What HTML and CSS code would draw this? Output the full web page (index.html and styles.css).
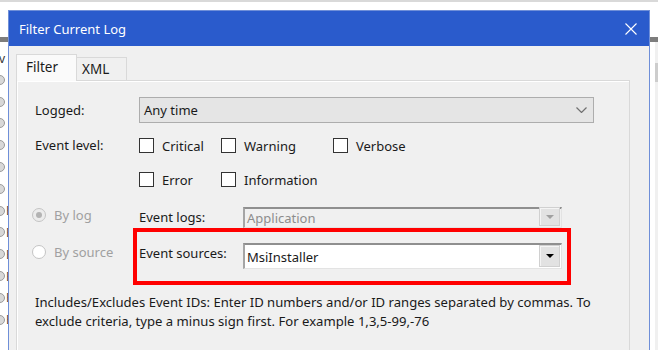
FILE: index.html
```html
<!DOCTYPE html>
<html lang="en">
<head>
    <meta charset="UTF-8">
    <title>Filter Current Log</title>
    <link rel="stylesheet" href="styles.css">
</head>
<body>
<div class="desk">
    <div class="desk-top"></div>
    <div class="desk-bar"></div>
    <div class="desk-main">
        <div class="desk-list">
            <div class="desk-head">v</div>
            <div class="desk-row"><span class="dot"></span><span class="mark">|</span></div>
            <div class="desk-row"><span class="dot"></span><span class="mark">|</span></div>
            <div class="desk-row"><span class="dot"></span><span class="mark">|</span></div>
            <div class="desk-row"><span class="dot"></span><span class="mark">|</span></div>
            <div class="desk-row"><span class="dot"></span><span class="mark">|</span></div>
            <div class="desk-row"><span class="dot"></span><span class="mark">|</span></div>
            <div class="desk-row"><span class="dot"></span><span class="mark e">E</span></div>
            <div class="desk-row"><span class="dot"></span><span class="mark e">E</span></div>
            <div class="desk-row"><span class="dot"></span><span class="mark e">E</span></div>
            <div class="desk-row"><span class="dot"></span><span class="mark e">E</span></div>
            <div class="desk-row"><span class="dot"></span><span class="mark e">E</span></div>
            <div class="desk-row"><span class="dot"></span><span class="mark e">E</span></div>
        </div>
        <div class="desk-scroll"><div class="thumb"></div></div>
    </div>
</div>

<div class="dialog">
    <div class="titlebar">
        <span class="title">Filter Current Log</span>
        <svg class="close" width="12" height="12" viewBox="0 0 12 12">
            <path d="M0.5 0.5 L11.5 11.5 M11.5 0.5 L0.5 11.5" stroke="#fff" stroke-width="1.1" fill="none"/>
        </svg>
    </div>
    <div class="dialog-body">
        <div class="tabs">
            <div class="tab active">Filter</div>
            <div class="tab">XML</div>
        </div>
        <div class="panel">
            <div class="row">
                <div class="lbl">Logged:</div>
                <div class="select">
                    <span>Any time</span>
                    <svg class="chev" width="11" height="6" viewBox="0 0 11 6">
                        <path d="M0.5 0.5 L5.5 5.5 L10.5 0.5" stroke="#707070" stroke-width="1.2" fill="none"/>
                    </svg>
                </div>
            </div>
            <div class="row levels">
                <div class="lbl">Event level:</div>
                <div class="checks">
                    <label class="check"><span class="box"></span>Critical</label>
                    <label class="check"><span class="box"></span>Warning</label>
                    <label class="check"><span class="box"></span>Verbose</label>
                    <label class="check"><span class="box"></span>Error</label>
                    <label class="check"><span class="box"></span>Information</label>
                </div>
            </div>
            <div class="source">
                <div class="radios">
                    <div class="radio"><span class="circle on"></span>By log</div>
                    <div class="radio"><span class="circle"></span>By source</div>
                </div>
                <div class="fields">
                    <div class="field">
                        <div class="flbl">Event logs:</div>
                        <div class="combo disabled">
                            <span>Application</span>
                            <span class="drop"><span class="tri"></span></span>
                        </div>
                    </div>
                    <div class="field mark-box">
                        <div class="flbl">Event sources:</div>
                        <div class="combo tall">
                            <span>MsiInstaller</span>
                            <span class="drop"><span class="tri"></span></span>
                        </div>
                    </div>
                </div>
            </div>
            <p class="note">Includes/Excludes Event IDs: Enter ID numbers and/or ID ranges separated by commas. To<br>exclude criteria, type a minus sign first. For example 1,3,5-99,-76</p>
        </div>
    </div>
</div>
</body>
</html>
```

FILE: styles.css
```css
body {
    margin: 0;
    width: 658px;
    height: 350px;
    overflow: hidden;
    position: relative;
    background: #fff;
    font-family: "Noto Sans", "Open Sans", sans-serif;
    font-size: 13px;
    color: #1a1a1a;
}

/* window behind the dialog */
.desk {
    height: 350px;
    display: flex;
    flex-direction: column;
}
.desk-top {
    height: 35px;
    border-top: 2px solid #d9d9d9;
}
.desk-bar {
    height: 5px;
    background: #7d7d7d;
}
.desk-main {
    flex: 1;
    display: flex;
    overflow: hidden;
}
.desk-list {
    flex: 1;
    padding-top: 6px;
}
.desk-head {
    height: 21px;
    font-size: 12px;
    line-height: 21px;
    margin-left: -1px;
    color: #333;
}
.desk-row {
    height: 21.8px;
    display: flex;
    align-items: center;
    gap: 1px;
    margin-left: -5px;
}
.dot {
    width: 8px;
    height: 8px;
    border-radius: 50%;
    border: 1px solid #9a9a9a;
    background: #d8d8d8;
}
.mark {
    font-size: 12px;
    color: #7a3f8f;
}
.mark.e {
    color: #444;
}
.desk-scroll {
    width: 3px;
    background: #f0f0f0;
}
.desk-scroll .thumb {
    margin-top: 21px;
    height: 19px;
    background: #cdcdcd;
}

/* dialog window */
.dialog {
    position: absolute;
    left: 8px;
    top: 10px;
    width: 640px;
    height: 340px;
    overflow: hidden;
    border: 1px solid #6f8fd8;
    border-bottom: none;
    background: #f0f0f0;
}
.titlebar {
    height: 35px;
    background: #2a5bcc;
    display: flex;
    align-items: center;
    justify-content: space-between;
    padding: 0 12px 0 10px;
}
.title {
    color: #fff;
    font-size: 13px;
}
.close {
    margin-top: 1px;
}
.dialog-body {
    padding: 8px 19px 0 7px;
}

.tabs {
    display: flex;
    align-items: flex-end;
    height: 26px;
    position: relative;
    z-index: 1;
}
.tab {
    width: 51px;
    height: 23px;
    box-sizing: border-box;
    border: 1px solid #d9d9d9;
    border-bottom: none;
    background: #f0f0f0;
    padding-left: 5px;
    margin-left: -1px;
    line-height: 23px;
    font-size: 13.5px;
}
.tab.active {
    height: 27px;
    width: 61px;
    margin-left: 0;
    margin-bottom: -1px;
    background: #fafafa;
    padding-left: 9px;
    line-height: 25px;
}
.panel {
    border: 1px solid #d9d9d9;
    box-shadow: inset 1px 1px 0 #fff;
    padding: 16px 0 0 18px;
    height: 300px;
}

.row {
    display: flex;
}
.lbl {
    width: 104px;
}
.row .lbl {
    line-height: 26px;
}
.select {
    width: 443px;
    height: 24px;
    border: 1px solid #adadad;
    background: #e5e5e5;
    display: flex;
    align-items: center;
    padding: 0 6px 0 4px;
}
.select span {
    margin-right: auto;
}

.levels {
    margin-top: 15px;
}
.levels .lbl {
    line-height: 15px;
}
.checks {
    display: grid;
    grid-template-columns: 82px 112px auto;
    row-gap: 19px;
}
.check {
    display: flex;
    align-items: center;
    height: 15px;
    gap: 8px;
}
.box {
    width: 13px;
    height: 13px;
    border: 1px solid #333;
    background: #fff;
}

.source {
    display: flex;
    margin-top: 20px;
    margin-left: -3px;
}
.radios {
    width: 101px;
    padding-top: 1px;
    display: flex;
    flex-direction: column;
    gap: 23px;
}
.radio {
    display: flex;
    align-items: center;
    gap: 8px;
    height: 14px;
    color: #a0a0a0;
}
.circle {
    width: 12px;
    height: 12px;
    border-radius: 50%;
    border: 1px solid #c4c4c4;
    background: #fff;
    position: relative;
}
.circle.on {
    background: #ececec;
}
.circle.on::after {
    content: "";
    position: absolute;
    left: 3px;
    top: 3px;
    width: 6px;
    height: 6px;
    border-radius: 50%;
    background: #b3b3b3;
}

.field {
    display: flex;
    padding-left: 6px;
}
.flbl {
    width: 104px;
    line-height: 20px;
}
.combo {
    width: 314px;
    height: 18px;
    border-top: 2px solid #8f8f8f;
    border-left: 2px solid #a5a5a5;
    border-right: 1px solid #e3e3e3;
    border-bottom: 1px solid #e3e3e3;
    background: #fff;
    display: flex;
    align-items: center;
    justify-content: space-between;
    padding-left: 2px;
}
.combo.disabled {
    background: #f0f0f0;
    color: #8d8d8d;
}
.combo.tall {
    height: 23px;
}
.drop {
    width: 19px;
    height: 17px;
    margin-right: 1px;
    margin-bottom: 1px;
    align-self: flex-end;
    background: #e2e2e2;
    border: 1px solid #d0d0d0;
    box-shadow: inset 1px 1px 0 #f4f4f4;
    display: flex;
    align-items: center;
    justify-content: center;
}
.combo.tall .drop {
    height: 20px;
}
.tri {
    width: 0;
    height: 0;
    border-left: 4px solid transparent;
    border-right: 4px solid transparent;
    border-top: 4px solid #000;
}
.combo.disabled .tri {
    border-top-color: #a0a0a0;
}

.mark-box {
    width: 428px;
    border: 4px solid #ff0000;
    padding: 11px 0 12px 2px;
}

.note {
    margin: 8px 0 0 0;
    line-height: 19px;
    font-size: 13.1px;
}
```
